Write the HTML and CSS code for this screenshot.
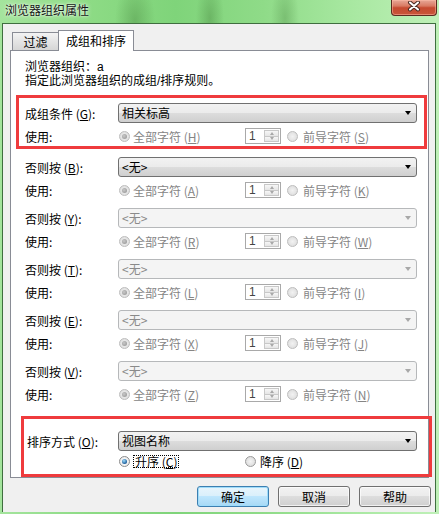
FILE: index.html
```html
<!DOCTYPE html>
<html lang="zh-CN">
<head>
<meta charset="utf-8">
<title>浏览器组织属性</title>
<link rel="stylesheet" href="styles.css">
</head>
<body>
<div class="titlebar">
  <span class="title">浏览器组织属性</span>
  <span class="close"><svg width="14" height="11" viewBox="0 0 14 11"><path d="M3 1.5L11 8.5M11 1.5L3 8.5" stroke="#4a2a22" stroke-width="4" stroke-linecap="round"/><path d="M3 1.5L11 8.5M11 1.5L3 8.5" stroke="#fff" stroke-width="2" stroke-linecap="round"/></svg></span>
</div>
<div class="client">
  <div class="tabs">
    <div class="tab">过滤</div>
    <div class="tab active">成组和排序</div>
  </div>
  <div class="panel">
    <div class="intro">
      <div>浏览器组织：a</div>
      <div>指定此浏览器组织的成组/排序规则。</div>
    </div>

    <div class="redbox first">
      <div class="row sel-row"><span class="lbl">成组条件 (<u>G</u>):</span><div class="select"><span>相关标高</span><i class="arrow"></i></div></div>
      <div class="row use-row"><span class="lbl">使用:</span><span class="opt1"><i class="radio dis checked"></i><span class="dtext">全部字符 (<u>H</u>)</span></span><span class="spin"><span class="v">1</span><span class="sb"><b class="up"></b><b class="dn"></b></span></span><i class="radio dis r2"></i><span class="dtext t2">前导字符 (<u>S</u>)</span></div>
    </div>

    <div class="grp gb">
      <div class="row sel-row"><span class="lbl">否则按 (<u>B</u>):</span><div class="select"><span>&lt;无&gt;</span><i class="arrow"></i></div></div>
      <div class="row use-row"><span class="lbl">使用:</span><span class="opt1"><i class="radio dis checked"></i><span class="dtext">全部字符 (<u>A</u>)</span></span><span class="spin"><span class="v">1</span><span class="sb"><b class="up"></b><b class="dn"></b></span></span><i class="radio dis r2"></i><span class="dtext t2">前导字符 (<u>K</u>)</span></div>
    </div>

    <div class="grp">
      <div class="row sel-row"><span class="lbl">否则按 (<u>Y</u>):</span><div class="select disabled"><span>&lt;无&gt;</span><i class="arrow"></i></div></div>
      <div class="row use-row"><span class="lbl">使用:</span><span class="opt1"><i class="radio dis checked"></i><span class="dtext">全部字符 (<u>R</u>)</span></span><span class="spin"><span class="v">1</span><span class="sb"><b class="up"></b><b class="dn"></b></span></span><i class="radio dis r2"></i><span class="dtext t2">前导字符 (<u>W</u>)</span></div>
    </div>

    <div class="grp">
      <div class="row sel-row"><span class="lbl">否则按 (<u>T</u>):</span><div class="select disabled"><span>&lt;无&gt;</span><i class="arrow"></i></div></div>
      <div class="row use-row"><span class="lbl">使用:</span><span class="opt1"><i class="radio dis checked"></i><span class="dtext">全部字符 (<u>L</u>)</span></span><span class="spin"><span class="v">1</span><span class="sb"><b class="up"></b><b class="dn"></b></span></span><i class="radio dis r2"></i><span class="dtext t2">前导字符 (<u>I</u>)</span></div>
    </div>

    <div class="grp">
      <div class="row sel-row"><span class="lbl">否则按 (<u>E</u>):</span><div class="select disabled"><span>&lt;无&gt;</span><i class="arrow"></i></div></div>
      <div class="row use-row"><span class="lbl">使用:</span><span class="opt1"><i class="radio dis checked"></i><span class="dtext">全部字符 (<u>X</u>)</span></span><span class="spin"><span class="v">1</span><span class="sb"><b class="up"></b><b class="dn"></b></span></span><i class="radio dis r2"></i><span class="dtext t2">前导字符 (<u>J</u>)</span></div>
    </div>

    <div class="grp">
      <div class="row sel-row"><span class="lbl">否则按 (<u>V</u>):</span><div class="select disabled"><span>&lt;无&gt;</span><i class="arrow"></i></div></div>
      <div class="row use-row"><span class="lbl">使用:</span><span class="opt1"><i class="radio dis checked"></i><span class="dtext">全部字符 (<u>Z</u>)</span></span><span class="spin"><span class="v">1</span><span class="sb"><b class="up"></b><b class="dn"></b></span></span><i class="radio dis r2"></i><span class="dtext t2">前导字符 (<u>N</u>)</span></div>
    </div>

    <div class="redbox sort">
      <div class="row sel-row"><span class="lbl">排序方式 (<u>O</u>):</span><div class="select"><span>视图名称</span><i class="arrow"></i></div></div>
      <div class="row sort-row"><span class="lbl"></span><span class="opt1"><i class="radio on checked"></i><span class="focus">升序 (<u>C</u>)</span></span><i class="radio off"></i><span class="stext">降序 (<u>D</u>)</span></div>
    </div>
  </div>
  <div class="buttons">
    <button class="btn default">确定</button>
    <button class="btn">取消</button>
    <button class="btn">帮助</button>
  </div>
</div>
</body>
</html>
```
FILE: styles.css
```css
* { box-sizing: border-box; }
html, body { margin: 0; padding: 0; }
body {
  width: 439px;
  height: 514px;
  overflow: hidden;
  font-family: "Noto Sans CJK SC", "Noto Sans", sans-serif;
  font-size: 12px;
  color: #000;
  background:
    radial-gradient(ellipse 20px 40px at 135px 20px, rgba(60,120,50,.35), transparent),
    radial-gradient(ellipse 14px 40px at 210px 18px, rgba(60,120,50,.35), transparent),
    radial-gradient(ellipse 14px 40px at 285px 18px, rgba(60,120,50,.3), transparent),
    linear-gradient(90deg, #a4e49d 0%, #8ddb85 20%, #7fd47a 40%, #8fdb88 60%, #a8e8a1 80%, #bff0b8 100%);
}
.titlebar {
  height: 23px;
  display: flex;
  justify-content: space-between;
  align-items: flex-start;
}
.title {
  padding: 3px 0 0 5px;
  line-height: 14px;
  font-size: 12px;
  color: #141414;
  text-shadow: 0 0 5px rgba(255,255,255,.9), 0 0 2px rgba(255,255,255,.9);
}
.close {
  width: 46px;
  height: 16px;
  margin-right: 2px;
  border: 1px solid #5c2b20;
  border-top: none;
  border-radius: 0 0 4px 4px;
  background: linear-gradient(#e7a897 0%, #d97a63 40%, #c64a30 52%, #c8563a 100%);
  box-shadow: inset 0 0 0 1px rgba(255,190,170,.5);
  display: flex;
  align-items: flex-start;
  justify-content: center;
  padding-top: 1px;
}
.client {
  margin: 0 3px 0 2px;
  height: 489px;
  border: 1px solid #3f6e3f;
  border-bottom: none;
  background: #f0f0f0;
}
.tabs {
  display: flex;
  align-items: flex-end;
  height: 20px;
  margin-top: 6px;
  padding-left: 9px;
}
.tab {
  width: 46px;
  height: 18px;
  border: 1px solid #898c95;
  border-bottom: none;
  border-right: none;
  background: linear-gradient(#f3f3f3, #e4e4e4 50%, #d6d6d6);
  text-align: center;
  line-height: 17px;
}
.tab.active {
  width: 76px;
  height: 21px;
  margin-bottom: -1px;
  border-right: 1px solid #898c95;
  background: #fff;
  position: relative;
  z-index: 1;
  line-height: 19px;
}
.panel {
  margin: 0 6px 0 7px;
  height: 428px;
  border: 1px solid #898c95;
  background: #fff;
}
.intro {
  padding: 9px 0 0 14px;
  font-family: "Liberation Sans", "Noto Sans CJK SC", sans-serif;
  line-height: 14px;
}
.row {
  display: flex;
  align-items: center;
  white-space: nowrap;
}
.sel-row { height: 20px; }
.use-row { height: 16px; margin-top: 5px; }
.lbl { width: 93px; flex: none; }
u { text-decoration: underline; text-underline-offset: 1px; }

.redbox { border: 3px solid #ef3b3d; }
.redbox.first {
  margin: 7px 1px 0 5px;
  padding: 5px 6px 2px 6px;
}
.grp { padding: 0 10px 0 14px; margin-top: 10px; }
.grp.gb { margin-top: 8px; }
.redbox.sort {
  margin: 14px -4px 0 10px;
  padding: 12px 11px 5px 3px;
}
.redbox.sort .lbl { width: 91px; }
.sort-row { height: 16px; margin-top: 2px; }

.select {
  width: 299px;
  height: 20px;
  flex: none;
  border: 1px solid #707070;
  border-radius: 3px;
  background: linear-gradient(#f2f2f2 0%, #ebebeb 50%, #dddddd 50%, #cfcfcf 100%);
  display: flex;
  align-items: center;
  justify-content: space-between;
  padding: 0 5px 0 3px;
  line-height: 16px;
}
.arrow {
  width: 0;
  height: 0;
  border-left: 3.5px solid transparent;
  border-right: 3.5px solid transparent;
  border-top: 4px solid #000;
}
.select.disabled {
  border-color: #b6b8ba;
  background: #f4f4f4;
  color: #8a8a8a;
}
.select.disabled .arrow { border-top-color: #a8a8a8; }

.opt1 {
  width: 127px;
  flex: none;
  display: flex;
  align-items: center;
}
.radio {
  width: 11px;
  height: 11px;
  flex: none;
  border-radius: 50%;
  display: flex;
  align-items: center;
  justify-content: center;
}
.opt1 .radio { margin-left: 1px; margin-right: 3px; }
.radio.dis {
  border: 1px solid #bdbdbd;
  background: radial-gradient(circle, #f2f2f2 0%, #e3e3e3 60%, #d4d4d4 100%);
}
.radio.dis.checked::after {
  content: "";
  width: 5px;
  height: 5px;
  border-radius: 50%;
  background: radial-gradient(circle at 40% 40%, #c8c8c8, #8f8f8f);
}
.radio.r2 { margin-left: 6px; margin-right: 5px; }
.dtext { color: #858585; }

.spin {
  width: 36px;
  height: 16px;
  flex: none;
  border: 1px solid #a9a9a9;
  background: #fff;
  display: flex;
  align-items: center;
  justify-content: space-between;
  padding: 0 1px 0 3px;
}
.spin .v {
  font-family: "Liberation Sans", sans-serif;
  font-size: 12px;
  line-height: 14px;
  color: #444;
}
.sb {
  width: 15px;
  height: 12px;
  display: flex;
  flex-direction: column;
}
.sb b {
  flex: 1;
  border: 1px solid #c8c8c8;
  background: linear-gradient(#f7f7f7, #e5e5e5);
  display: flex;
  align-items: center;
  justify-content: center;
}
.sb b.dn { border-top: none; }
.sb b.up::after {
  content: "";
  border-left: 2.5px solid transparent;
  border-right: 2.5px solid transparent;
  border-bottom: 3px solid #a8a8a8;
}
.sb b.dn::after {
  content: "";
  border-left: 2.5px solid transparent;
  border-right: 2.5px solid transparent;
  border-top: 3px solid #a8a8a8;
}

.radio.on {
  border: 1px solid #8b8b8b;
  background: radial-gradient(circle, #ffffff 0%, #eeeeee 70%, #d8d8d8 100%);
}
.radio.on.checked::after {
  content: "";
  width: 5px;
  height: 5px;
  border-radius: 50%;
  background: radial-gradient(circle at 40% 35%, #9fdcfb, #1b5d9b 70%, #0f3e70);
}
.radio.off {
  border: 1px solid #9a9a9a;
  background: radial-gradient(circle, #f4f4f4 0%, #e2e2e2 60%, #cfcfcf 100%);
  margin-right: 4px;
}
.focus {
  border: 1px dotted #000;
  line-height: 11px;
  padding: 0 1px;
}

.buttons {
  display: flex;
  justify-content: flex-end;
  gap: 9px;
  margin-top: 8px;
  padding-right: 4px;
}
.btn {
  width: 72px;
  height: 21px;
  font-family: "Noto Sans CJK SC", "Noto Sans", sans-serif;
  font-size: 12px;
  line-height: 17px;
  color: #000;
  padding: 0;
  border: 1px solid #707070;
  border-radius: 3px;
  background: linear-gradient(#f2f2f2 0%, #ebebeb 50%, #dddddd 50%, #cfcfcf 100%);
  box-shadow: inset 0 0 0 1px rgba(255,255,255,.7);
}
.btn.default {
  border-color: #3c7fb1;
  background: linear-gradient(#e8f5fc 0%, #d9effb 50%, #bee6fd 50%, #a7d9f5 100%);
  box-shadow: inset 0 0 0 1px #9fdcfa;
}
```
